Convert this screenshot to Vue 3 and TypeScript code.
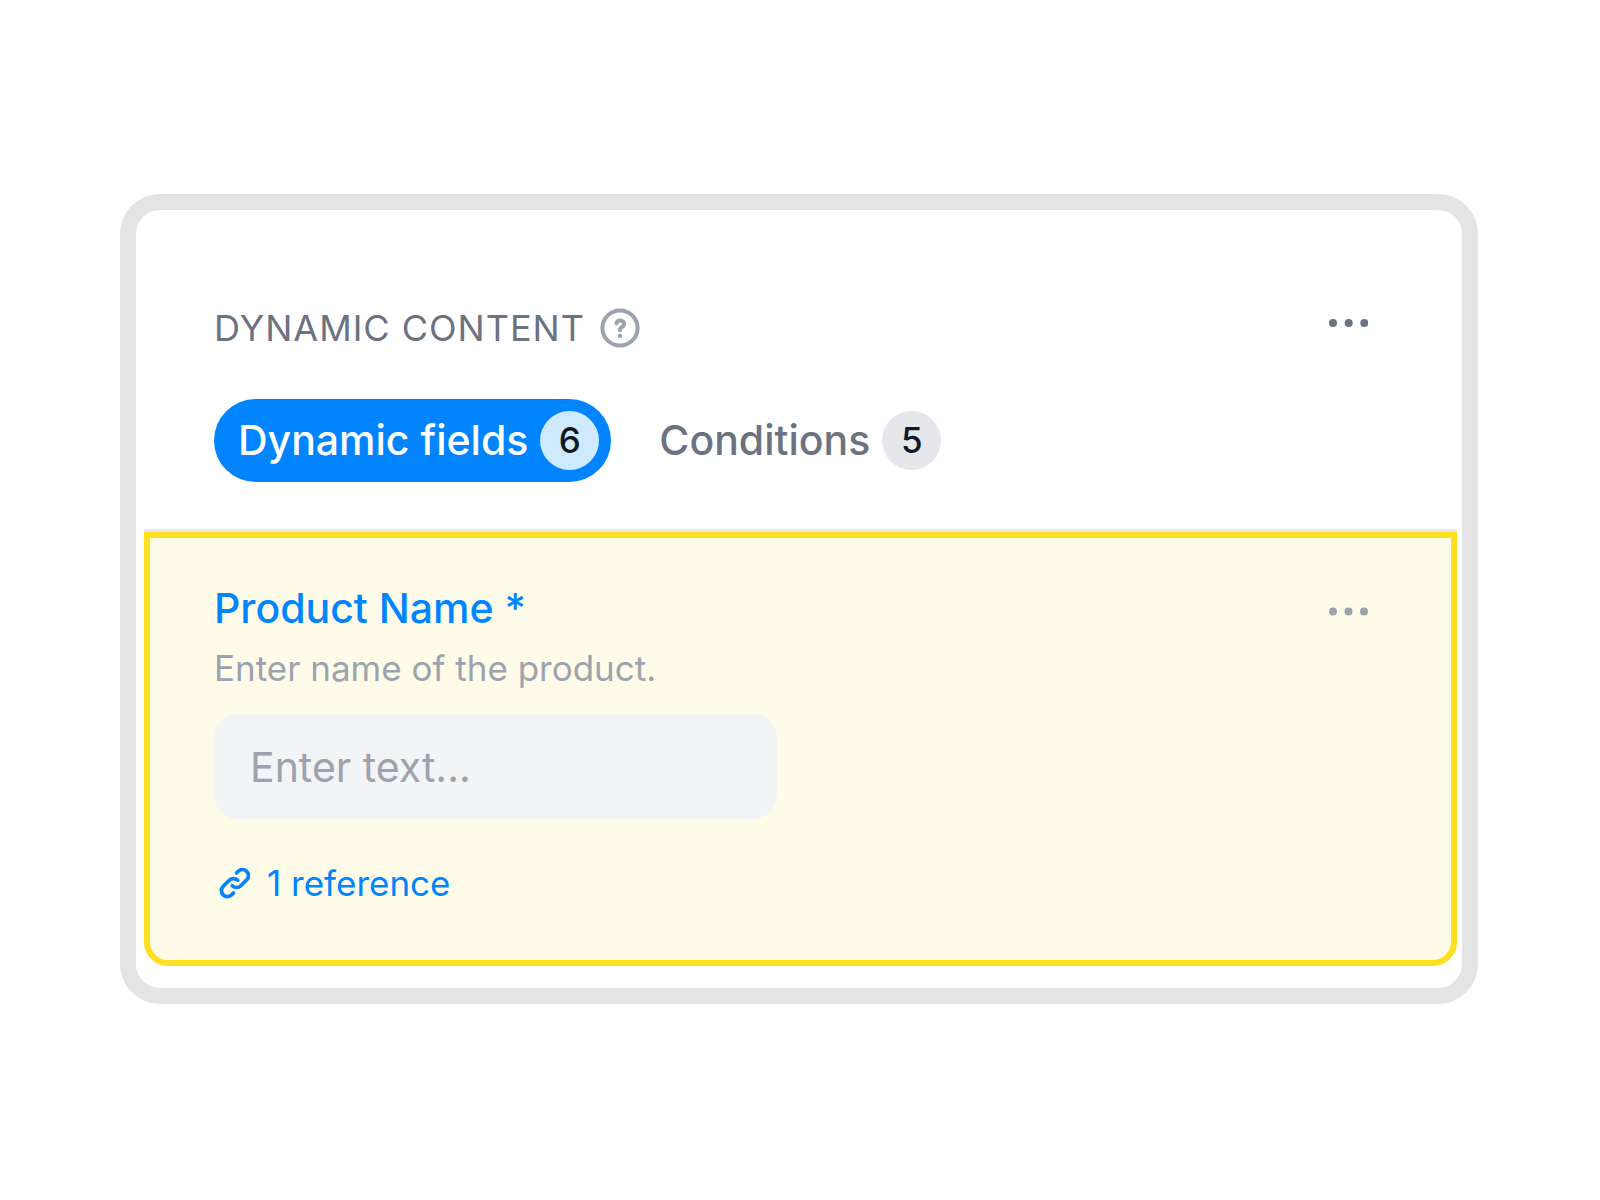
<script setup lang="ts">
import { ref } from 'vue'

interface Tab {
  id: string
  label: string
  count: number
}

const tabs: Tab[] = [
  { id: 'fields', label: 'Dynamic fields', count: 6 },
  { id: 'conditions', label: 'Conditions', count: 5 },
]

const activeTab = ref('fields')
const productName = ref('')
</script>

<template>
  <main class="panel">
    <header class="panel-header">
      <div class="title-row">
        <h1 class="title">Dynamic content</h1>
        <button class="icon-button help" type="button" aria-label="Help">
          <svg width="40" height="40" viewBox="0 0 40 40" fill="none" stroke="currentColor" stroke-linecap="round" stroke-linejoin="round">
            <circle cx="20" cy="20" r="17.6" stroke-width="4" />
            <path d="M16.3 15.4c.6-1.9 2-2.9 3.9-2.9 2.4 0 4 1.5 4 3.5 0 3.2-4.4 3.1-4.4 6.2" stroke-width="4" />
            <circle cx="19.9" cy="27.9" r="2.2" fill="currentColor" stroke="none" />
          </svg>
        </button>
        <button class="icon-button more" type="button" aria-label="Panel options">
          <svg width="40" height="38" viewBox="0 0 40 38" fill="currentColor">
            <circle cx="5" cy="19" r="4" />
            <circle cx="20.7" cy="19" r="4" />
            <circle cx="36.3" cy="19" r="4" />
          </svg>
        </button>
      </div>
      <nav class="tabs" aria-label="Dynamic content">
        <button
          v-for="tab in tabs"
          :key="tab.id"
          type="button"
          class="tab"
          :class="{ active: tab.id === activeTab }"
          @click="activeTab = tab.id"
        >
          <span>{{ tab.label }}</span>
          <span class="badge">{{ tab.count }}</span>
        </button>
      </nav>
    </header>

    <section class="field">
      <div class="field-body">
        <label class="field-label" for="product-name">Product Name *</label>
        <p id="product-hint" class="field-hint">Enter name of the product.</p>
        <input
          id="product-name"
          v-model="productName"
          class="field-input"
          type="text"
          placeholder="Enter text..."
          aria-describedby="product-hint"
        />
        <a class="reference" href="#references">
          <svg width="36" height="36" viewBox="0 0 24 24" fill="none" stroke="currentColor" stroke-width="2.5" stroke-linecap="round" stroke-linejoin="round">
            <path d="M13.828 10.172a4 4 0 0 0-5.656 0l-4 4a4 4 0 1 0 5.656 5.656l1.102-1.101m-.758-4.899a4 4 0 0 0 5.656 0l4-4a4 4 0 0 0-5.656-5.656l-1.1 1.1" />
          </svg>
          <span>1 reference</span>
        </a>
      </div>
      <button class="icon-button field-more" type="button" aria-label="Field options">
        <svg width="40" height="60" viewBox="0 0 40 60" fill="currentColor">
          <circle cx="5" cy="29.5" r="4" />
          <circle cx="20.5" cy="29.5" r="4" />
          <circle cx="36" cy="29.5" r="4" />
        </svg>
      </button>
    </section>
  </main>
</template>

<style>
body {
  background: #ffffff;
}
</style>

<style scoped>
.panel,
.panel * {
  box-sizing: border-box;
}

.panel {
  margin: 194px 122px 0 120px;
  padding: 0 5px 22px 8px;
  border: 16px solid #e4e4e4;
  border-radius: 40px;
  background: #ffffff;
  font-family: Inter, 'Liberation Sans', sans-serif;
}

button {
  margin: 0;
  padding: 0;
  border: 0;
  background: none;
  font: inherit;
  cursor: pointer;
}

.panel-header {
  padding: 94px 89px 47px 70px;
  border-bottom: 3px solid #e5e7eb;
}

.title-row {
  display: flex;
  align-items: flex-start;
  height: 48px;
}

.title {
  margin: 0;
  color: #6b7280;
  font-size: 36px;
  font-weight: 400;
  line-height: 48px;
  letter-spacing: 1px;
  text-transform: uppercase;
}

.icon-button {
  display: flex;
  flex: none;
}

.help {
  align-self: center;
  margin-left: 15px;
  color: #9ca3af;
}

.more {
  margin-left: auto;
  color: #6b7280;
}

.tabs {
  display: flex;
  gap: 24px;
  margin-top: 47px;
}

.tab {
  display: flex;
  align-items: center;
  gap: 12px;
  padding: 12px 12px 12px 24px;
  border-radius: 42px;
  color: #6b7280;
  font-size: 41px;
  font-weight: 500;
  line-height: 51px;
}

.tab.active {
  background: #0084ff;
  color: #ffffff;
}

.badge {
  width: 59px;
  border-radius: 30px;
  background: #e5e7eb;
  color: #111827;
  font-size: 35px;
  line-height: 59px;
  text-align: center;
}

.tab.active .badge {
  background: #cfeaff;
  color: #14181c;
}

.field {
  display: flex;
  align-items: flex-start;
  justify-content: space-between;
  padding: 44px 83px 55px 64px;
  border: 6px solid #ffdf20;
  border-radius: 0 0 24px 24px;
  background: #fefce8;
}

.field-body {
  display: flex;
  flex: 1;
  flex-direction: column;
  align-items: flex-start;
}

.field-label {
  color: #0084ff;
  font-size: 41px;
  font-weight: 500;
  line-height: 52px;
}

.field-hint {
  margin: 12px 0 24px;
  color: #9ca3af;
  font-size: 35px;
  line-height: 44px;
}

.field-input {
  width: 563px;
  max-width: 100%;
  height: 105px;
  padding: 0 36px;
  border: 0;
  border-radius: 24px;
  background: #f3f4f6;
  color: #111827;
  font-family: inherit;
  font-size: 41px;
}

.field-input::placeholder {
  color: #9ca3af;
  opacity: 1;
}

.reference {
  display: flex;
  align-items: center;
  gap: 14px;
  margin-top: 42px;
  padding-left: 3px;
  color: #0084ff;
  font-size: 35px;
  line-height: 44px;
  text-decoration: none;
}

.field-more {
  color: #9ca3af;
}
</style>
